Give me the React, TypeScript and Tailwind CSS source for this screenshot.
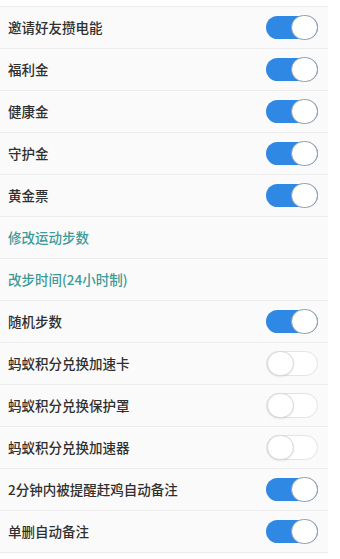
import React from "react";

type Row = { label: string; kind: "toggle" | "link"; on?: boolean };

const rows: Row[] = [
  { label: "邀请好友攒电能", kind: "toggle", on: true },
  { label: "福利金", kind: "toggle", on: true },
  { label: "健康金", kind: "toggle", on: true },
  { label: "守护金", kind: "toggle", on: true },
  { label: "黄金票", kind: "toggle", on: true },
  { label: "修改运动步数", kind: "link" },
  { label: "改步时间(24小时制)", kind: "link" },
  { label: "随机步数", kind: "toggle", on: true },
  { label: "蚂蚁积分兑换加速卡", kind: "toggle", on: false },
  { label: "蚂蚁积分兑换保护罩", kind: "toggle", on: false },
  { label: "蚂蚁积分兑换加速器", kind: "toggle", on: false },
  { label: "2分钟内被提醒赶鸡自动备注", kind: "toggle", on: true },
  { label: "单删自动备注", kind: "toggle", on: true },
];

function Toggle({ on }: { on: boolean }) {
  return on ? (
    <div className="flex h-[23px] w-[52px] items-center justify-end rounded-full bg-[#2e88e4]">
      <div className="h-[25px] w-[27px] rounded-full border-[1.5px] border-[#8e9eab] bg-white" />
    </div>
  ) : (
    <div className="flex h-[25px] w-[52px] items-center justify-start rounded-full border border-[#e4e4e4] bg-white">
      <div className="h-[25px] w-[27px] rounded-full border border-[#d6d6d6] bg-white shadow-[0_1px_2px_rgba(0,0,0,0.08)]" />
    </div>
  );
}

export default function App() {
  return (
    <div
      className="min-h-[559px] w-[340px] bg-white pt-[6px]"
      style={{ fontFamily: '"Noto Sans CJK SC", "Noto Sans", sans-serif' }}
    >
      <div className="w-[328px] border-t border-[#ededed] bg-[#fafafa]">
        {rows.map((r) => (
          <div
            key={r.label}
            className="flex h-[42px] items-center justify-between border-b border-[#ededed] pl-[8px] pr-[10px]"
          >
            <span
              className={
                r.kind === "link"
                  ? "text-[13.5px] font-medium text-[#3e9b98]"
                  : "text-[13.5px] font-medium text-[#2f2f2f]"
              }
            >
              {r.label}
            </span>
            {r.kind === "toggle" && <Toggle on={!!r.on} />}
          </div>
        ))}
      </div>
    </div>
  );
}
